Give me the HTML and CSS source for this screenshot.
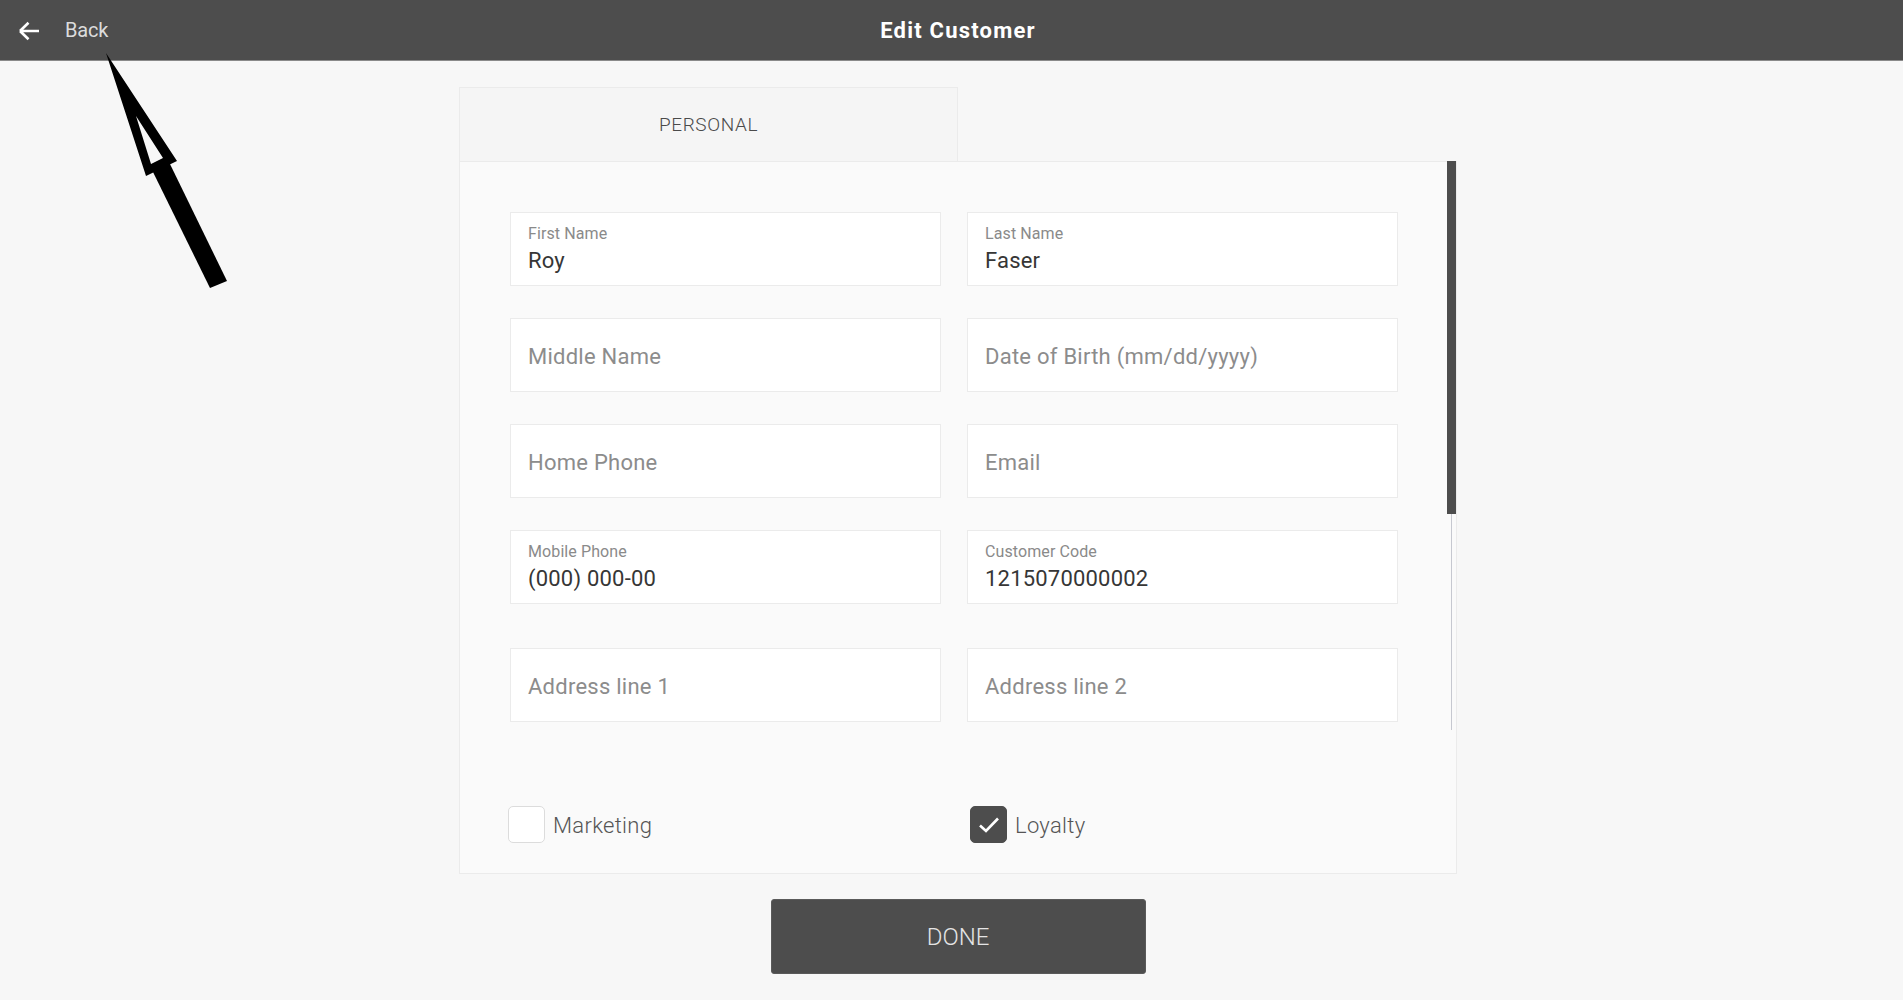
FILE: index.html
```html
<!DOCTYPE html>
<html lang="en">
<head>
<meta charset="utf-8">
<title>Edit Customer</title>
<link rel="stylesheet" href="styles.css">
</head>
<body>
<header class="topbar">
  <a class="back" href="#">
    <svg class="back-icon" width="22" height="20" viewBox="0 0 22 20" aria-hidden="true">
      <path d="M2 10H21M2 10L10.5 1.8M2 10L10.5 18.2" fill="none" stroke="#ffffff" stroke-width="2.6" stroke-linecap="butt" stroke-linejoin="miter"/>
    </svg>
    <span class="back-label">Back</span>
  </a>
  <h1 class="title">Edit Customer</h1>
  <div class="spacer"></div>
</header>

<main class="page">
  <section class="card">
    <div class="tabs">
      <div class="tab tab-active">PERSONAL</div>
    </div>
    <div class="card-body">
      <div class="scroll-area">
        <div class="form">
          <div class="grid">
            <div class="field"><span class="field-label">First Name</span><span class="field-value">Roy</span></div>
            <div class="field"><span class="field-label">Last Name</span><span class="field-value">Faser</span></div>
            <div class="field field-empty"><span class="placeholder">Middle Name</span></div>
            <div class="field field-empty"><span class="placeholder">Date of Birth (mm/dd/yyyy)</span></div>
            <div class="field field-empty"><span class="placeholder">Home Phone</span></div>
            <div class="field field-empty"><span class="placeholder">Email</span></div>
            <div class="field"><span class="field-label">Mobile Phone</span><span class="field-value">(000) 000-00</span></div>
            <div class="field"><span class="field-label">Customer Code</span><span class="field-value">1215070000002</span></div>
          </div>
          <div class="grid grid-address">
            <div class="field field-empty"><span class="placeholder">Address line 1</span></div>
            <div class="field field-empty"><span class="placeholder">Address line 2</span></div>
          </div>
        </div>
        <div class="scrollbar">
          <div class="scroll-thumb"></div>
          <div class="scroll-track"></div>
        </div>
      </div>
      <div class="checks">
        <label class="check">
          <span class="box"></span>
          <span class="check-label">Marketing</span>
        </label>
        <label class="check">
          <span class="box box-on">
            <svg width="24" height="20" viewBox="0 0 24 20" aria-hidden="true"><path d="M3 10.5L9 16L21 3.5" fill="none" stroke="#ffffff" stroke-width="2.6"/></svg>
          </span>
          <span class="check-label">Loyalty</span>
        </label>
      </div>
    </div>
  </section>
  <button class="done" type="button">DONE</button>
</main>

<svg class="annotation" width="240" height="300" viewBox="0 0 240 300" aria-hidden="true">
  <path d="M106 53 L177 161 L146 176 Z M136 116 L163 158 L151 164 Z" fill="#000" fill-rule="evenodd"/>
  <path d="M152 170 L169 162 L227 281 L210 288 Z" fill="#000"/>
</svg>
</body>
</html>
```

FILE: styles.css
```css
* { box-sizing: border-box; }

html, body {
  margin: 0;
  padding: 0;
}

body {
  background: #f7f7f7;
  font-family: Roboto, "Noto Sans", "Liberation Sans", sans-serif;
  color: #333;
  height: 1000px;
  overflow: hidden;
}

.topbar {
  height: 61px;
  background: #4d4d4d;
  border-bottom: 1px solid #8a8a8a;
  display: grid;
  grid-template-columns: 1fr auto 1fr;
  align-items: center;
  padding-left: 13px;
}

.back {
  display: flex;
  align-items: center;
  text-decoration: none;
  margin-left: 5px;
  justify-self: start;
}

.back-icon {
  display: block;
  margin-top: 1px;
}

.back-label {
  margin-left: 25px;
  color: #dcdcdc;
  font-size: 20px;
  letter-spacing: -0.2px;
}

.title {
  margin: 0;
  color: #ffffff;
  font-size: 22px;
  font-weight: 700;
  letter-spacing: 1.2px;
}

.page {
  display: flex;
  flex-direction: column;
  align-items: center;
  padding: 26px 0 0 13px;
}

.card {
  width: 998px;
}

.tabs {
  display: flex;
}

.tab {
  width: 499px;
  height: 74px;
  display: flex;
  align-items: center;
  justify-content: center;
  font-size: 19px;
  font-weight: 300;
  color: #4a4a4a;
  letter-spacing: 0.6px;
}

.tab-active {
  background: #f5f5f5;
  border: 1px solid #ebebeb;
  border-bottom: none;
}

.card-body {
  background: #fafafa;
  border: 1px solid #ebebeb;
  border-top: none;
  box-shadow: inset 0 1px 0 #ebebeb;
  height: 713px;
  display: flex;
  flex-direction: column;
}

.scroll-area {
  height: 569px;
  display: flex;
}

.form {
  flex: 1;
  overflow: hidden;
  padding: 51px 50px 0 50px;
}

.grid {
  display: grid;
  grid-template-columns: 431px 431px;
  column-gap: 26px;
  row-gap: 32px;
}

.grid-address {
  margin-top: 44px;
}

.field {
  height: 74px;
  background: #ffffff;
  border: 1px solid #ebebeb;
  padding: 12px 16px 0 17px;
  display: flex;
  flex-direction: column;
}

.field-empty {
  padding-top: 2px;
  justify-content: center;
}

.field-label {
  font-size: 16px;
  line-height: 18px;
  color: #8a8a8a;
  letter-spacing: 0.1px;
}

.field-value {
  margin-top: 5px;
  font-size: 22px;
  line-height: 25px;
  color: #363636;
  letter-spacing: 0.2px;
}

.placeholder {
  font-size: 22px;
  line-height: 25px;
  color: #8c8c8c;
  letter-spacing: 0.25px;
}

.scrollbar {
  width: 9px;
  display: flex;
  flex-direction: column;
}

.scroll-thumb {
  height: 353px;
  background: #4d4d4d;
}

.scroll-track {
  flex: 1;
  width: 1px;
  margin-left: 4px;
  background: #c6c8d0;
}

.checks {
  flex: 1;
  display: grid;
  grid-template-columns: 462px 1fr;
  padding: 76px 0 0 48px;
  align-items: start;
}

.check {
  display: flex;
  align-items: center;
}

.box {
  width: 37px;
  height: 37px;
  border: 1px solid #dcdcdc;
  border-radius: 5px;
  background: #ffffff;
  display: flex;
  align-items: center;
  justify-content: center;
}

.box-on {
  background: #4d4d4d;
  border-color: #4d4d4d;
}

.check-label {
  margin-left: 8px;
  font-size: 22px;
  font-weight: 300;
  color: #555555;
  letter-spacing: 0.3px;
  padding-top: 2px;
}

.done {
  margin-top: 25px;
  width: 375px;
  height: 75px;
  background: #4d4d4d;
  border: 1px solid #5a5a5a;
  border-radius: 3px;
  color: #e4e4e4;
  font-family: Roboto, "Noto Sans", "Liberation Sans", sans-serif;
  font-size: 24px;
  font-weight: 300;
  padding: 0;
}

.annotation {
  position: absolute;
  left: 0;
  top: 0;
  pointer-events: none;
}
```
